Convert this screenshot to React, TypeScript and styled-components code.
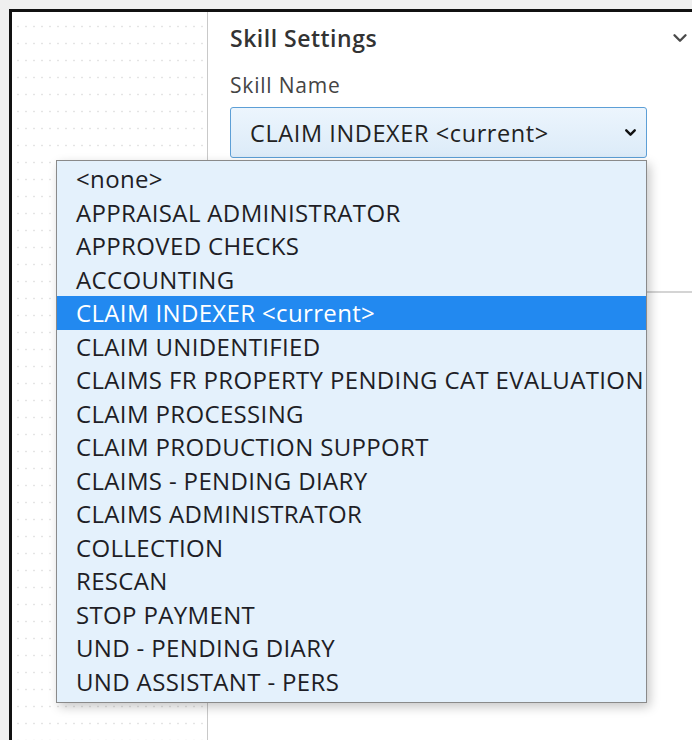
import React from "react";
import styled, { createGlobalStyle } from "styled-components";
import { ChevronDown } from "lucide-react";

const skills = [
  "<none>",
  "APPRAISAL ADMINISTRATOR",
  "APPROVED CHECKS",
  "ACCOUNTING",
  "CLAIM INDEXER <current>",
  "CLAIM UNIDENTIFIED",
  "CLAIMS FR PROPERTY PENDING CAT EVALUATION",
  "CLAIM PROCESSING",
  "CLAIM PRODUCTION SUPPORT",
  "CLAIMS - PENDING DIARY",
  "CLAIMS ADMINISTRATOR",
  "COLLECTION",
  "RESCAN",
  "STOP PAYMENT",
  "UND - PENDING DIARY",
  "UND ASSISTANT - PERS",
];

const selected = "CLAIM INDEXER <current>";

const GlobalStyle = createGlobalStyle`
  html, body {
    margin: 0;
    background: #efefef;
    font-family: "Open Sans", "Noto Sans", sans-serif;
    color: #222;
  }
`;

const Page = styled.div`
  height: 740px;
  padding: 9px 0 0 9px;
  box-sizing: border-box;
  overflow: hidden;
`;

const Frame = styled.div`
  height: 100%;
  border-top: 3px solid #111;
  border-left: 3px solid #111;
  background: #fff;
  display: grid;
  grid-template-columns: 196px 1fr;
`;

const Canvas = styled.div`
  border-right: 1px solid #c9c9c9;
  background-color: #fff;
  background-image: radial-gradient(circle, #e4e4e4 0.8px, transparent 1.2px);
  background-size: 8px 17px;
  background-position: 10px 6px;
`;

const Panel = styled.div`
  display: flex;
  flex-direction: column;
`;

const Section = styled.div`
  padding: 11px 0 0 22px;
  height: 281px;
  border-bottom: 2px solid #d4d4d4;
  box-sizing: border-box;
`;

const Header = styled.div`
  display: flex;
  align-items: center;
  justify-content: space-between;
  height: 30px;
  color: #333;
`;

const Title = styled.span`
  font-size: 23px;
  font-weight: 600;
  letter-spacing: 0.5px;
`;

const Collapse = styled.span`
  display: flex;
  margin-right: 1px;
  color: #4a4a4a;
`;

const Label = styled.div`
  margin-top: 18px;
  font-size: 21px;
  letter-spacing: 0.8px;
  color: #444;
  line-height: 28px;
`;

const SelectWrap = styled.div`
  position: relative;
  margin-top: 8px;
  width: 417px;
`;

const SelectBox = styled.div`
  height: 51px;
  box-sizing: border-box;
  border: 1px solid #5d9fd6;
  border-radius: 3px;
  background: linear-gradient(#ecf5fd, #dcebf8);
  display: flex;
  align-items: center;
  justify-content: space-between;
  padding: 0 7px 0 19px;
  font-size: 23.5px;
  letter-spacing: 0.6px;
  color: #222;
`;

const Menu = styled.ul`
  position: absolute;
  top: calc(100% + 2px);
  left: -174px;
  right: 0;
  margin: 0;
  padding: 1px 0 4px;
  list-style: none;
  background: #e4f1fc;
  border: 1px solid #8a8a8a;
  box-shadow: 3px 4px 10px rgba(0, 0, 0, 0.22);
  z-index: 2;
`;

const Option = styled.li<{ $active?: boolean }>`
  height: 33.5px;
  line-height: 33.5px;
  padding-left: 19px;
  font-size: 24px;
  letter-spacing: 0.35px;
  white-space: nowrap;
  color: ${(p) => (p.$active ? "#fff" : "#1e1e26")};
  background: ${(p) => (p.$active ? "#2289f0" : "transparent")};
`;

export default function App() {
  return (
    <>
      <GlobalStyle />
      <Page>
        <Frame>
          <Canvas />
          <Panel>
            <Section>
              <Header>
                <Title>Skill Settings</Title>
                <Collapse>
                  <ChevronDown size={22} strokeWidth={2.6} />
                </Collapse>
              </Header>
              <Label>Skill Name</Label>
              <SelectWrap>
                <SelectBox>
                  <span>{selected}</span>
                  <ChevronDown size={17} strokeWidth={3.4} color="#111" />
                </SelectBox>
                <Menu>
                  {skills.map((s) => (
                    <Option key={s} $active={s === selected}>
                      {s}
                    </Option>
                  ))}
                </Menu>
              </SelectWrap>
            </Section>
          </Panel>
        </Frame>
      </Page>
    </>
  );
}
